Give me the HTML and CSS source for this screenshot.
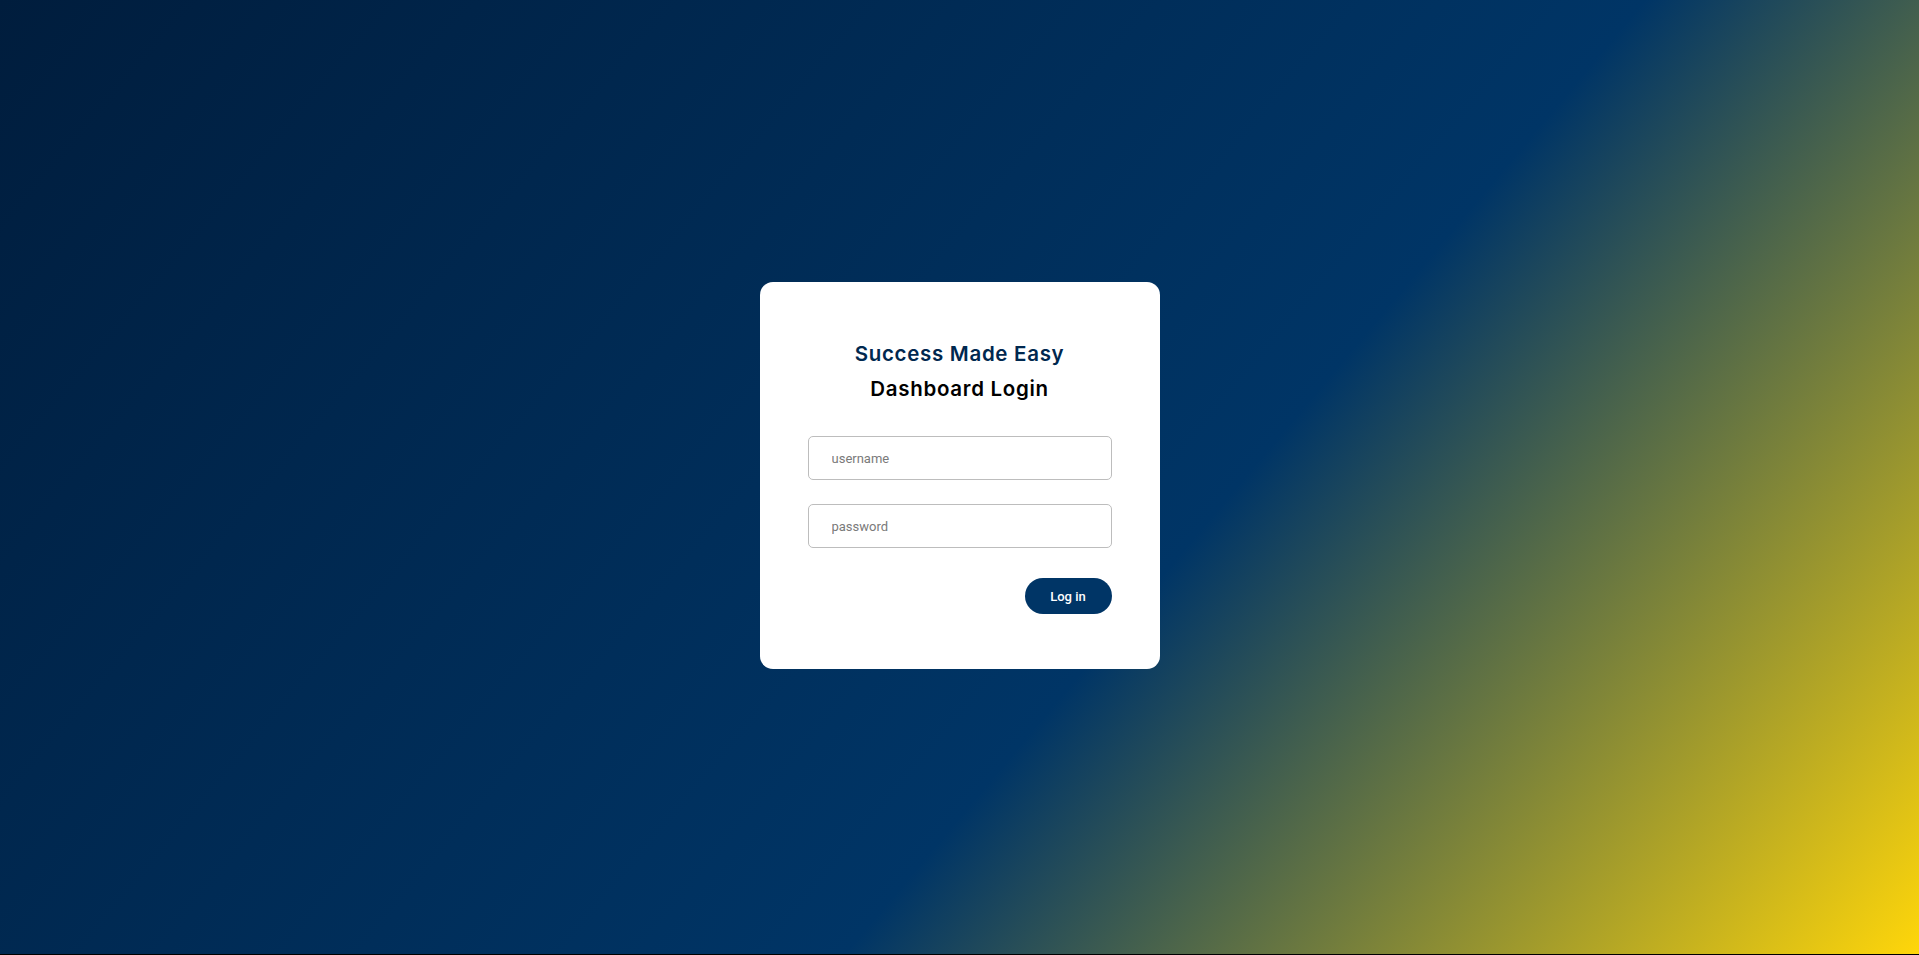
FILE: index.html
```html
<!DOCTYPE html>
<html lang="en">
<head>
<meta charset="utf-8">
<title>Dashboard Login</title>
<link rel="stylesheet" href="styles.css">
</head>
<body>
<main class="page">
  <form class="card" onsubmit="return false;">
    <h1 class="title">
      <span class="title-brand">Success Made Easy</span>
      <span class="title-sub">Dashboard Login</span>
    </h1>
    <div class="fields">
      <input class="field" type="text" placeholder="username">
      <input class="field" type="password" placeholder="password">
    </div>
    <div class="actions">
      <button class="btn" type="submit">Log in</button>
    </div>
  </form>
</main>
</body>
</html>
```

FILE: styles.css
```css
html {
  background: #000;
}
body {
  margin: 0;
  font-family: Roboto, "Liberation Sans", Arial, sans-serif;
}
.page {
  height: 954px;
  display: flex;
  align-items: center;
  justify-content: center;
  background: linear-gradient(130deg, #001d3d 0%, #003566 60.5%, #ffd60a 100%);
  padding-bottom: 3px;
  box-sizing: border-box;
}
.card {
  width: 400px;
  box-sizing: border-box;
  background: #fff;
  border-radius: 13px;
  padding: 54px 48px 55px;
  display: flex;
  flex-direction: column;
}
.title {
  margin: 0;
  display: flex;
  flex-direction: column;
  align-items: center;
  font-family: Inter, "Open Sans", sans-serif;
  font-weight: 600;
  font-size: 20.5px;
  line-height: 35px;
  letter-spacing: 0.7px;
}
.title-brand {
  color: #00284f;
}
.title-sub {
  color: #000;
}
.fields {
  margin-top: 30px;
  display: flex;
  flex-direction: column;
  gap: 24px;
}
.field {
  height: 44px;
  box-sizing: border-box;
  border: 1px solid #bdbdbd;
  border-radius: 5px;
  padding: 0 23px;
  font-family: Roboto, "Liberation Sans", sans-serif;
  font-size: 13px;
  color: #333;
  outline: none;
}
.field::placeholder {
  color: #7a7a7a;
}
.actions {
  margin-top: 30px;
  display: flex;
  justify-content: flex-end;
}
.btn {
  width: 87px;
  height: 36px;
  border: none;
  border-radius: 18px;
  background: #003566;
  color: #fff;
  font-family: Roboto, "Liberation Sans", sans-serif;
  font-weight: 500;
  font-size: 13px;
  cursor: pointer;
}
```
